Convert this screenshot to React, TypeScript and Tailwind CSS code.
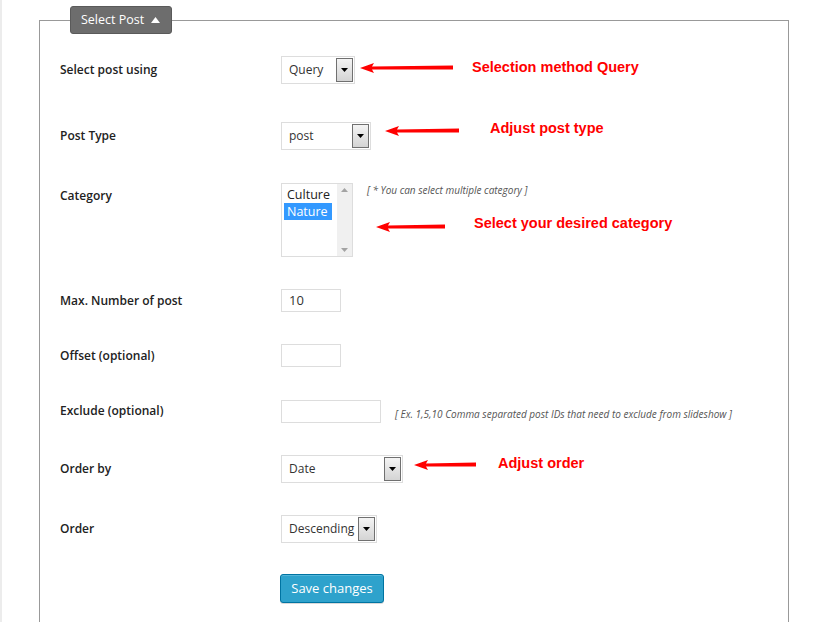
import React from 'react';

const Arrow: React.FC<{ width: number }> = ({ width }) => (
  <svg width={width} height={12} viewBox={`0 0 ${width} 12`} className="block">
    <polygon points={`0,6 14,1 12,4.5 ${width},3.5 ${width},7.5 12,7.5 14,11`} fill="#ff0000" />
  </svg>
);

const Note: React.FC<{ text: string }> = ({ text }) => (
  <span className="font-['Open_Sans'] text-[10px] italic text-[#555]">{text}</span>
);

const Hint: React.FC<{ text: string }> = ({ text }) => (
  <span className="font-['Liberation_Sans',Arial,sans-serif] text-[14.5px] font-bold text-[#ff0000]">{text}</span>
);

const SelectBox: React.FC<{ value: string; width: number }> = ({ value, width }) => (
  <div
    className="flex h-[28px] items-stretch border border-[#dddddd] bg-white p-[1px]"
    style={{ width }}
  >
    <span className="flex flex-1 items-center pl-[6px] text-[12px] text-[#333]">{value}</span>
    <span className="flex w-[17px] items-center justify-center border border-[#707070] bg-gradient-to-b from-[#f4f4f4] to-[#d4d4d4]">
      <svg width="7" height="4" viewBox="0 0 7 4">
        <polygon points="0,0 7,0 3.5,4" fill="#000" />
      </svg>
    </span>
  </div>
);

const TextBox: React.FC<{ value?: string; width: number }> = ({ value, width }) => (
  <div
    className="flex h-[23px] items-center border border-[#dddddd] bg-white pl-[7px] text-[13px] text-[#333]"
    style={{ width }}
  >
    {value}
  </div>
);

const Row: React.FC<{ label: string; top: string; items?: string; labelPad?: string; children: React.ReactNode }> = ({
  label,
  top,
  items = 'items-center',
  labelPad = '',
  children,
}) => (
  <div className={`flex ${items} ${top}`}>
    <div className={`w-[221px] shrink-0 text-[12px] font-semibold text-[#222] ${labelPad}`}>{label}</div>
    {children}
  </div>
);

export default function App() {
  return (
    <div className="min-h-[622px] overflow-hidden border-l-[2px] border-[#ececec] bg-white font-['Open_Sans',sans-serif]">
      <fieldset className="ml-[37px] mt-[6px] h-[640px] w-[750px] border border-[#999] px-[20px]">
        <legend className="ml-[10px] flex h-[28px] w-[102px] items-center gap-[7px] rounded-[3px] border border-[#5a5a5a] bg-[#6d6d6d] pl-[10px] text-[12.5px] text-white">
          Select Post
          <svg width="9" height="6" viewBox="0 0 9 6">
            <polygon points="0,6 9,6 4.5,0" fill="#fff" />
          </svg>
        </legend>

        <Row label="Select post using" top="mt-[22px]">
          <SelectBox value="Query" width={74} />
          <div className="ml-[5px] mt-[-4px]">
            <Arrow width={93} />
          </div>
          <div className="ml-[19px] mt-[-8px]">
            <Hint text="Selection method Query" />
          </div>
        </Row>

        <Row label="Post Type" top="mt-[38px]">
          <SelectBox value="post" width={90} />
          <div className="ml-[14px] mt-[-11px]">
            <Arrow width={74} />
          </div>
          <div className="ml-[31px] mt-[-18px]">
            <Hint text="Adjust post type" />
          </div>
        </Row>

        <Row label="Category" top="mt-[33px]" items="items-start" labelPad="pt-[4px]">
          <div className="flex h-[74px] w-[72px] border border-[#dddddd] bg-white">
            <div className="flex flex-1 flex-col pl-[2px] pt-[2px] text-[12.5px] leading-[17px] text-[#222]">
              <span className="pl-[3px]">Culture</span>
              <span className="w-[48px] bg-[#3399ff] pl-[3px] text-white">Nature</span>
            </div>
            <div className="flex w-[15px] flex-col items-center justify-between bg-[#f0f0f0] py-[4px]">
              <svg width="7" height="4" viewBox="0 0 7 4">
                <polygon points="0,4 7,4 3.5,0" fill="#a3a3a3" />
              </svg>
              <svg width="7" height="4" viewBox="0 0 7 4">
                <polygon points="0,0 7,0 3.5,4" fill="#a3a3a3" />
              </svg>
            </div>
          </div>
          <div className="ml-[14px] flex flex-col">
            <Note text="[ * You can select multiple category ]" />
            <div className="mt-[12px] flex items-center">
              <div className="ml-[9px] mt-[10px]">
                <Arrow width={69} />
              </div>
              <div className="ml-[29px]">
                <Hint text="Select your desired category" />
              </div>
            </div>
          </div>
        </Row>

        <Row label="Max. Number of post" top="mt-[32px]">
          <TextBox value="10" width={60} />
        </Row>

        <Row label="Offset (optional)" top="mt-[32px]">
          <TextBox width={60} />
        </Row>

        <Row label="Exclude (optional)" top="mt-[31px]">
          <TextBox width={100} />
          <div className="ml-[14px] mt-[2px]">
            <Note text="[ Ex. 1,5,10 Comma separated post IDs that need to exclude from slideshow ]" />
          </div>
        </Row>

        <Row label="Order by" top="mt-[31px]">
          <SelectBox value="Date" width={122} />
          <div className="ml-[11px] mt-[-8px]">
            <Arrow width={62} />
          </div>
          <div className="ml-[22px] mt-[-14px]">
            <Hint text="Adjust order" />
          </div>
        </Row>

        <Row label="Order" top="mt-[32px]">
          <SelectBox value="Descending" width={96} />
        </Row>

        <div className="mt-[31px] pl-[220px]">
          <button className="h-[29px] w-[104px] rounded-[3px] border border-[#0074a2] bg-[#2ea2cc] text-[13px] text-white shadow-[inset_0_1px_0_rgba(120,200,230,0.5),0_1px_0_rgba(0,0,0,0.15)]">
            Save changes
          </button>
        </div>
      </fieldset>
    </div>
  );
}
